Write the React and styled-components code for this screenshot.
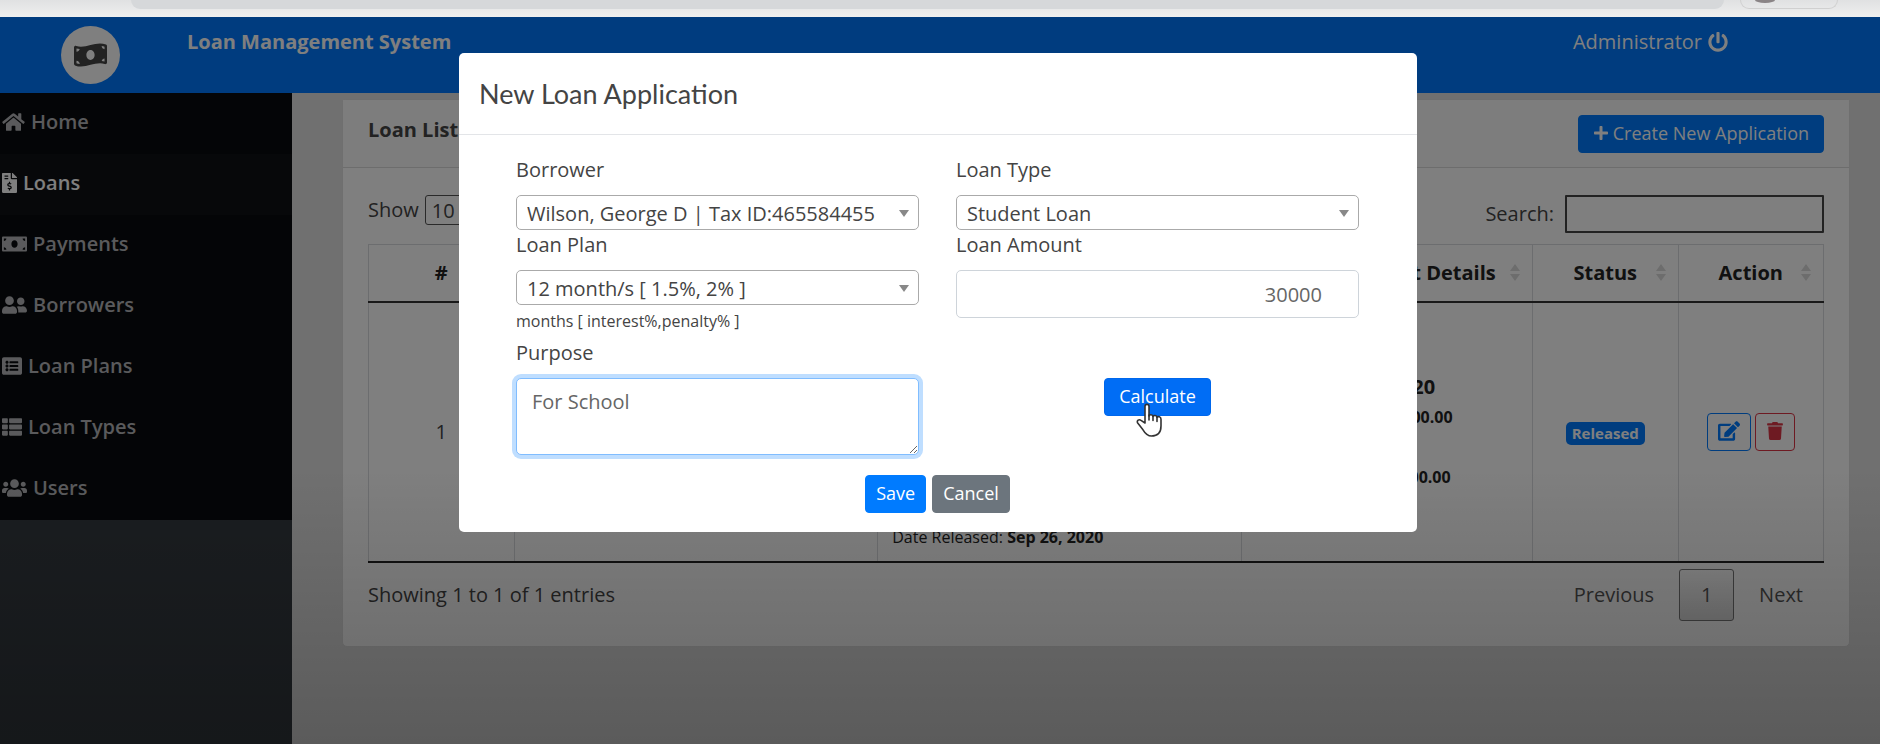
import React from "react";
import styled, { createGlobalStyle, css } from "styled-components";
import {
  FaHome,
  FaFileInvoiceDollar,
  FaMoneyBill,
  FaMoneyBillWave,
  FaUserFriends,
  FaListAlt,
  FaThList,
  FaUsers,
  FaPowerOff,
  FaPlus,
  FaEdit,
  FaTrash,
} from "react-icons/fa";

const GlobalStyle = createGlobalStyle`
  *, *::before, *::after { box-sizing: border-box; }
  body {
    margin: 0;
    font-family: "Open Sans", "Noto Sans", sans-serif;
    font-size: 20px;
    line-height: 30px;
    color: #444;
    background: #e0e0e0;
  }
  button, input, select, textarea { font: inherit; color: inherit; }
`;

const Page = styled.div`
  display: flex;
  flex-direction: column;
  min-height: 100vh;
`;

/* Browser chrome */

const BrowserStrip = styled.div`
  display: flex;
  align-items: flex-start;
  height: 17px;
  padding: 0 42px 0 131px;
  gap: 16px;
  overflow: hidden;
  background: linear-gradient(#e0e1e2, #efefef);
`;

const AddressBar = styled.div`
  flex: 1;
  height: 9px;
  padding-left: 16px;
  border-radius: 0 0 16px 16px;
  background: #d6d8da;
  overflow: hidden;
`;

const ProfileChip = styled.div`
  width: 98px;
  height: 9px;
  padding-left: 14px;
  border: 1px solid #d0d0d0;
  border-top: 0;
  border-radius: 0 0 16px 16px;
`;

const Avatar = styled.div`
  width: 20px;
  height: 3px;
  border-radius: 0 0 10px 10px / 0 0 3px 3px;
  background: #8a8486;
`;

/* Application shell */

const Shell = styled.div`
  position: relative;
  display: flex;
  flex-direction: column;
  flex: 1;
`;

const TopBar = styled.header`
  display: flex;
  align-items: flex-start;
  height: 76px;
  padding-right: 152px;
  color: #fff;
  background: #0078ff;
`;

const LogoArea = styled.div`
  display: flex;
  align-items: center;
  align-self: center;
  justify-content: center;
  width: 187px;
  padding-right: 6px;
`;

const Logo = styled.div`
  display: flex;
  align-items: center;
  justify-content: center;
  width: 59px;
  height: 58px;
  border-radius: 50%;
  background: #fff;
  color: #444;
  svg { width: 33px; height: 28px; }
`;

const Brand = styled.div`
  flex: 1;
  padding-top: 10px;
  font-weight: 700;
`;

const AccountLink = styled.a`
  display: flex;
  align-items: center;
  gap: 6px;
  padding-top: 10px;
  color: #fff;
  text-decoration: none;
`;

const Columns = styled.div`
  display: flex;
  flex: 1;
`;

const Sidebar = styled.nav`
  flex: none;
  width: 292px;
  background: #343a40;
`;

const NavLink = styled.a`
  display: flex;
  align-items: center;
  gap: 6px;
  height: 61px;
  padding: 0 2px 4px;
  font-weight: 600;
  color: ${(p) => (p.$active ? "#fff" : "#b4b5b8")};
  background: ${(p) => (p.$active ? "#0f1114" : "#090b0e")};
  text-decoration: none;
  svg { width: ${(p) => p.$iconWidth}px; height: 20px; }
`;

const Main = styled.main`
  flex: 1;
  min-width: 0;
  padding: 6px 30px 30px 50px;
`;

const Card = styled.section`
  border: 1px solid #dedede;
  border-radius: 5px;
  background: #fff;
`;

const CardHeader = styled.div`
  display: flex;
  align-items: flex-start;
  justify-content: space-between;
  padding: 15px 25px 14px;
  border-bottom: 1px solid #dbdbdb;
  background: #fbfbfb;
`;

const CardTitle = styled.h1`
  margin: 0;
  font-size: 20px;
  line-height: 30px;
  font-weight: 700;
`;

const CardBody = styled.div`
  padding: 27px 25px 25px;
`;

const palette = {
  primary: { face: "#007bff", edge: "#007bff", text: "#fff" },
  pressed: { face: "#006df5", edge: "#0067ec", text: "#fff" },
  secondary: { face: "#6c757d", edge: "#6c757d", text: "#fff" },
  outlinePrimary: { face: "transparent", edge: "#007bff", text: "#007bff" },
  outlineDanger: { face: "transparent", edge: "#dc3545", text: "#dc3545" },
};

const Button = styled.button`
  display: inline-flex;
  align-items: center;
  justify-content: center;
  gap: 4px;
  height: 38px;
  padding: 0 ${(p) => (p.$wide ? 14 : 10)}px 2px;
  border: 1px solid;
  border-radius: 4px;
  font-size: 18px;
  ${(p) => {
    const c = palette[p.$tone || "primary"];
    return css`
      color: ${c.text};
      background: ${c.face};
      border-color: ${c.edge};
    `;
  }}
`;

/* Loan table */

const TableTools = styled.div`
  display: flex;
  align-items: flex-start;
  justify-content: space-between;
  margin-bottom: 11px;
`;

const LengthLabel = styled.label`
  display: flex;
  align-items: center;
  gap: 6px;
`;

const LengthSelect = styled.select`
  height: 30px;
  padding: 0 2px;
  border: 1px solid #555;
  border-radius: 3px;
  line-height: 28px;
  background: #fff;
`;

const SearchLabel = styled.label`
  display: flex;
  align-items: center;
  gap: 11px;
`;

const SearchInput = styled.input`
  width: 259px;
  height: 38px;
  padding: 4px 8px;
  border: 2px solid #444;
  border-radius: 1px;
  background: transparent;
`;

const Table = styled.table`
  width: 100%;
  border-collapse: collapse;
  table-layout: fixed;
  border-bottom: 2px solid #222;
`;

const HeadCell = styled.th`
  width: ${(p) => p.$width};
  height: 57px;
  padding: 0;
  border: 1px solid #d8dade;
  border-bottom: 2px solid #333;
  color: #222;
  text-align: center;
`;

const HeadContent = styled.div`
  display: grid;
  grid-template-columns: 22px 1fr 22px;
  align-items: center;
  justify-items: center;
  span { grid-column: 2; white-space: nowrap; }
  svg { justify-self: start; }
`;

const Cell = styled.td`
  padding: 9px 14px;
  border: 1px solid #d8dade;
  border-bottom: 2px solid #222;
  vertical-align: middle;
  text-align: ${(p) => p.$align || "left"};
`;

const Line = styled.p`
  margin: 0;
  font-size: ${(p) => (p.$large ? 20 : 16)}px;
  line-height: 30px;
  color: #222;
`;

const Badge = styled.span`
  display: inline-block;
  padding: 0 6px;
  border-radius: 5px;
  font-size: 15px;
  line-height: 23px;
  font-weight: 700;
  color: #fff;
  background: #007bff;
`;

const ButtonPair = styled.div`
  display: flex;
  justify-content: center;
  gap: ${(p) => p.$gap}px;
`;

const TableFooter = styled.div`
  display: flex;
  align-items: center;
  justify-content: space-between;
  padding-top: 6px;
`;

const Pager = styled.nav`
  display: flex;
  gap: 4px;
`;

const PageButton = styled.button`
  min-width: 55px;
  height: 52px;
  padding: 0 20px;
  border: 1px solid ${(p) => (p.$current ? "#777" : "transparent")};
  border-radius: 3px;
  color: #555;
  background: ${(p) => (p.$current ? "linear-gradient(#fff, #dcdcdc)" : "transparent")};
`;

/* Dialog */

const Backdrop = styled.div`
  position: absolute;
  inset: 0;
  padding: 36px 4px 0 0;
  background:
    linear-gradient(rgba(0, 0, 0, 0) 62%, rgba(0, 0, 0, 0.19) 100%),
    rgba(0, 0, 0, 0.5);
`;

const Dialog = styled.div`
  width: 100%;
  max-width: 958px;
  margin: 0 auto;
  border-radius: 5px;
  background: #fff;
`;

const DialogHeader = styled.div`
  padding: 26px 20px 25px;
  border-bottom: 1px solid #e3e5e8;
`;

const DialogTitle = styled.h2`
  margin: 0;
  font-family: Lato, "Open Sans", sans-serif;
  font-size: 27px;
  line-height: 30px;
  font-weight: 400;
  color: #444;
`;

const Form = styled.form`
  padding: 20px 58px 19px 57px;
`;

const FieldGrid = styled.div`
  display: grid;
  grid-template-columns: 1fr 1fr;
  column-gap: 37px;
`;

const Field = styled.div`
  display: flex;
  flex-direction: column;
  label { margin-bottom: 10px; }
`;

const SelectBox = styled.div`
  position: relative;
  svg {
    position: absolute;
    top: 15px;
    right: 10px;
    pointer-events: none;
  }
`;

const Select = styled.select`
  display: block;
  width: 100%;
  height: 35px;
  padding: 2px 30px 0 10px;
  border: 1px solid #aaa;
  border-radius: 5px;
  appearance: none;
  background: #fff;
`;

const Hint = styled.small`
  margin: 4px 0 5px;
  font-size: 16px;
  line-height: 24px;
`;

const AmountInput = styled.input`
  height: 48px;
  padding: 0 36px 0 14px;
  border: 1px solid #ced4da;
  border-radius: 5px;
  text-align: right;
  color: #666;
`;

const PurposeInput = styled.textarea`
  height: 77px;
  padding: 8px 15px;
  border: 1px solid #80bdff;
  border-radius: 5px;
  outline: none;
  box-shadow: 0 0 0 4px #bfdeff;
  color: #666;
  resize: vertical;
`;

const CalculateArea = styled.div`
  display: flex;
  justify-content: center;
  padding-top: 40px;
`;

const PointerAnchor = styled.div`
  position: relative;
  height: 38px;
`;

const Pointer = styled.svg`
  position: absolute;
  top: 25px;
  left: 32px;
`;

const DialogActions = styled.div`
  padding-top: 20px;
`;

const navItems = [
  { label: "Home", icon: FaHome, iconWidth: 23 },
  { label: "Loans", icon: FaFileInvoiceDollar, iconWidth: 15, active: true },
  { label: "Payments", icon: FaMoneyBill, iconWidth: 25 },
  { label: "Borrowers", icon: FaUserFriends, iconWidth: 25 },
  { label: "Loan Plans", icon: FaListAlt, iconWidth: 20 },
  { label: "Loan Types", icon: FaThList, iconWidth: 20 },
  { label: "Users", icon: FaUsers, iconWidth: 25 },
];

const columns = [
  ["#", "10%"],
  ["Borrower", "25%"],
  ["Loan Details", "25%"],
  ["Next Payment Details", "20%"],
  ["Status", "10%"],
  ["Action", "10%"],
];

const SortIcon = () => (
  <svg width="10" height="17" viewBox="0 0 10 17" fill="#dadada" aria-hidden="true">
    <path d="M5 0l5 7H0zM5 17l5-7H0z" />
  </svg>
);

const Caret = () => (
  <svg width="10" height="7" viewBox="0 0 10 7" fill="#888" aria-hidden="true">
    <path d="M0 0h10L5 7z" />
  </svg>
);

const HandPointer = () => (
  <Pointer width="28" height="34" viewBox="0 0 28 34" aria-hidden="true">
    <path
      d="M9 20V3.500C9 .7 13 .7 13 3.500V13c.4-1.700 3.600-1.700 4 .4.600-1.400 3.700-1.200 4 .9 1-1.200 4-.7 4 1.900V23c0 6-3 10-9.500 10-4.500 0-6.500-2.800-8.500-6.200L1.700 20c-1.300-2.300 1.300-4.200 3.300-2.600z"
      fill="#fff"
      stroke="#333"
      strokeWidth="1.600"
      strokeLinejoin="round"
    />
    <path d="M13 12v5M17 13v4.500M21 14v4.500" stroke="#333" strokeWidth="1.600" strokeLinecap="round" />
  </Pointer>
);

const SelectField = ({ id, label, value, hint }) => (
  <Field>
    <label htmlFor={id}>{label}</label>
    <SelectBox>
      <Select id={id} defaultValue={value}>
        <option>{value}</option>
      </Select>
      <Caret />
    </SelectBox>
    {hint && <Hint>{hint}</Hint>}
  </Field>
);

const LoanTable = () => (
  <Table>
    <thead>
      <tr>
        {columns.map(([name, width]) => (
          <HeadCell key={name} $width={width}>
            <HeadContent>
              <span>{name}</span>
              {name !== "#" && <SortIcon />}
            </HeadContent>
          </HeadCell>
        ))}
      </tr>
    </thead>
    <tbody>
      <tr>
        <Cell $align="center">1</Cell>
        <Cell />
        <Cell>
          <Line>Reference: <b>1</b></Line>
          <Line>Loan type: <b>Student Loan</b></Line>
          <Line>Plan: <b>12 month/s</b></Line>
          <Line>Amount: <b>30,000.00</b></Line>
          <Line>Total Payable Amount: <b>30,000.00</b></Line>
          <Line>Monthly Payable Amount: <b>2,500.00</b></Line>
          <Line>Overdue Payable Amount: <b>0.00</b></Line>
          <Line>Date Released: <b>Sep 26, 2020</b></Line>
        </Cell>
        <Cell>
          <Line $large>Date: <b>Nov 26, 2020</b></Line>
          <Line>Monthly amount: <b>2,500.00</b></Line>
          <Line>Penalty: <b>0.00</b></Line>
          <Line>Payable Amount: <b>2,500.00</b></Line>
        </Cell>
        <Cell $align="center"><Badge>Released</Badge></Cell>
        <Cell $align="center">
          <ButtonPair $gap={4}>
            <Button type="button" $tone="outlinePrimary" aria-label="Edit loan"><FaEdit size={22} /></Button>
            <Button type="button" $tone="outlineDanger" aria-label="Delete loan"><FaTrash size={18} /></Button>
          </ButtonPair>
        </Cell>
      </tr>
    </tbody>
  </Table>
);

const LoanDialog = () => (
  <Dialog role="dialog" aria-labelledby="dialog-title">
    <DialogHeader>
      <DialogTitle id="dialog-title">New Loan Application</DialogTitle>
    </DialogHeader>
    <Form onSubmit={(e) => e.preventDefault()}>
      <FieldGrid>
        <SelectField id="borrower" label="Borrower" value="Wilson, George D | Tax ID:465584455" />
        <SelectField id="loan-type" label="Loan Type" value="Student Loan" />
        <SelectField
          id="loan-plan"
          label="Loan Plan"
          value="12 month/s [ 1.5%, 2% ]"
          hint="months [ interest%,penalty% ]"
        />
        <Field>
          <label htmlFor="amount">Loan Amount</label>
          <AmountInput id="amount" inputMode="numeric" defaultValue="30000" />
        </Field>
        <Field>
          <label htmlFor="purpose">Purpose</label>
          <PurposeInput id="purpose" defaultValue="For School" />
        </Field>
        <CalculateArea>
          <PointerAnchor>
            <Button type="button" $tone="pressed" $wide>Calculate</Button>
            <HandPointer />
          </PointerAnchor>
        </CalculateArea>
      </FieldGrid>
      <DialogActions>
        <ButtonPair $gap={6}>
          <Button type="submit">Save</Button>
          <Button type="button" $tone="secondary">Cancel</Button>
        </ButtonPair>
      </DialogActions>
    </Form>
  </Dialog>
);

export default function App() {
  return (
    <Page>
      <GlobalStyle />
      <BrowserStrip>
        <AddressBar>
          <svg width="320" height="3" viewBox="0 0 320 3" fill="#777" aria-hidden="true">
            <path d="M3 0h7v1H3zM100 0h2v1h-2zM145 0h2v1h-2zM213 0h2v2h-2zM238 0h2v2h-2zM256 0h2v2h-2zM277 0h8v1l-2 1h-4z" />
          </svg>
        </AddressBar>
        <ProfileChip><Avatar /></ProfileChip>
      </BrowserStrip>
      <Shell>
        <TopBar>
          <LogoArea>
            <Logo><FaMoneyBillWave /></Logo>
          </LogoArea>
          <Brand>Loan Management System</Brand>
          <AccountLink href="#logout">
            Administrator <FaPowerOff />
          </AccountLink>
        </TopBar>
        <Columns>
          <Sidebar>
            {navItems.map(({ label, icon: Icon, iconWidth, active }) => (
              <NavLink key={label} href={"#" + label} $active={active} $iconWidth={iconWidth}>
                <Icon />
                {label}
              </NavLink>
            ))}
          </Sidebar>
          <Main>
            <Card>
              <CardHeader>
                <CardTitle>Loan List</CardTitle>
                <Button type="button" $wide><FaPlus size={16} /> Create New Application</Button>
              </CardHeader>
              <CardBody>
                <TableTools>
                  <LengthLabel>
                    Show
                    <LengthSelect defaultValue="10">
                      <option>10</option>
                    </LengthSelect>
                    entries
                  </LengthLabel>
                  <SearchLabel>
                    Search:
                    <SearchInput type="search" />
                  </SearchLabel>
                </TableTools>
                <LoanTable />
                <TableFooter>
                  <div>Showing 1 to 1 of 1 entries</div>
                  <Pager aria-label="Pages">
                    <PageButton type="button">Previous</PageButton>
                    <PageButton type="button" $current>1</PageButton>
                    <PageButton type="button">Next</PageButton>
                  </Pager>
                </TableFooter>
              </CardBody>
            </Card>
          </Main>
        </Columns>
        <Backdrop>
          <LoanDialog />
        </Backdrop>
      </Shell>
    </Page>
  );
}
